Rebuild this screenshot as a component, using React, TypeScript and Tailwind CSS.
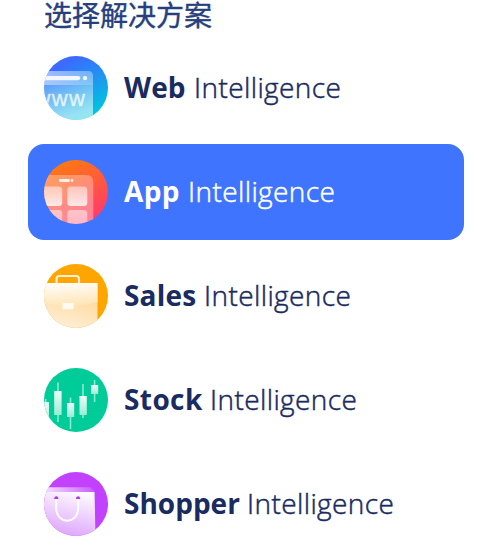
import type { ReactNode } from "react";

function Disc({ id, children }: { id: string; children: ReactNode }) {
  return (
    <svg viewBox="0 0 64 64" className="size-16 shrink-0" aria-hidden="true">
      <defs>
        <clipPath id={`${id}-clip`}>
          <circle cx="32" cy="32" r="32" />
        </clipPath>
      </defs>
      <g clipPath={`url(#${id}-clip)`}>{children}</g>
    </svg>
  );
}

function WebIcon() {
  return (
    <Disc id="web">
      <defs>
        <linearGradient id="web-bg" x1="0.35" y1="0.1" x2="0.75" y2="0.9">
          <stop offset="0" stopColor="#3b6bff" />
          <stop offset="1" stopColor="#00c4df" />
        </linearGradient>
        <linearGradient id="web-page" x1="0" y1="0" x2="0.35" y2="1">
          <stop offset="0" stopColor="#fff" stopOpacity="0.1" />
          <stop offset="1" stopColor="#fff" stopOpacity="0.58" />
        </linearGradient>
        <linearGradient id="web-bar" x1="0" y1="0" x2="1" y2="0">
          <stop offset="0" stopColor="#fff" stopOpacity="0.5" />
          <stop offset="1" stopColor="#fff" stopOpacity="0.12" />
        </linearGradient>
      </defs>
      <rect width="64" height="64" fill="url(#web-bg)" />
      <path d="M-4 15H44Q49 15 49 20V64H-4Z" fill="url(#web-page)" />
      <path d="M-4 15H44Q49 15 49 20V29H-4Z" fill="url(#web-bar)" />
      <rect x="-4" y="20" width="40.3" height="4.2" rx="2.1" fill="#fff" fillOpacity="0.88" />
      <circle cx="41" cy="22.1" r="2.2" fill="#fff" fillOpacity="0.9" />
      <text
        x="-9.5"
        y="50"
        fontSize="22"
        textLength="50.5"
        className="font-['Liberation_Sans',sans-serif]"
        fill="#fff"
        fillOpacity="0.72"
        stroke="#fff"
        strokeOpacity="0.5"
        strokeWidth="0.6"
      >
        www
      </text>
    </Disc>
  );
}

function AppIcon() {
  return (
    <Disc id="app">
      <defs>
        <linearGradient id="app-bg" x1="0.3" y1="0" x2="0.75" y2="0.9">
          <stop offset="0" stopColor="#ff7a0f" />
          <stop offset="1" stopColor="#ff3d68" />
        </linearGradient>
        <linearGradient id="app-phone" x1="0.4" y1="0" x2="0.3" y2="1">
          <stop offset="0" stopColor="#fff" stopOpacity="0.3" />
          <stop offset="1" stopColor="#fff" stopOpacity="0.36" />
        </linearGradient>
        <linearGradient id="app-tile" x1="0" y1="0" x2="0" y2="1">
          <stop offset="0" stopColor="#fff" stopOpacity="0.48" />
          <stop offset="1" stopColor="#fff" stopOpacity="0.8" />
        </linearGradient>
        <linearGradient id="app-low" x1="0" y1="0" x2="0" y2="1">
          <stop offset="0" stopColor="#fff" stopOpacity="0.5" />
          <stop offset="1" stopColor="#fff" stopOpacity="0.4" />
        </linearGradient>
      </defs>
      <rect width="64" height="64" fill="url(#app-bg)" />
      <path d="M-4 15H42Q49.3 15 49.3 22V64H-4Z" fill="url(#app-phone)" />
      <rect x="15" y="19" width="10.8" height="3" rx="1.2" fill="#fff" fillOpacity="0.85" />
      <circle cx="28" cy="20.5" r="1.4" fill="#fff" fillOpacity="0.85" />
      <rect x="-3" y="26.5" width="21.2" height="19.5" rx="3.5" fill="url(#app-tile)" />
      <rect x="23.3" y="26.5" width="20" height="19.5" rx="3.5" fill="url(#app-tile)" />
      <rect x="-3" y="50" width="21.2" height="20" rx="3.5" fill="url(#app-low)" />
      <rect x="23.3" y="50" width="20" height="20" rx="3.5" fill="url(#app-low)" />
    </Disc>
  );
}

function SalesIcon() {
  return (
    <Disc id="sales">
      <defs>
        <linearGradient id="sales-top" x1="0.4" y1="0" x2="0.6" y2="1">
          <stop offset="0" stopColor="#fffdf9" />
          <stop offset="1" stopColor="#ffe4b4" />
        </linearGradient>
        <linearGradient id="sales-low" x1="0.7" y1="0" x2="0.35" y2="1">
          <stop offset="0" stopColor="#ffd38a" />
          <stop offset="1" stopColor="#fff0dc" />
        </linearGradient>
      </defs>
      <rect width="64" height="64" fill="#ffa500" />
      <path d="M12.5 19V15Q12.5 12 15.5 12H32Q35 12 35 15V19" fill="none" stroke="#fff1d7" strokeWidth="2.2" />
      <rect x="-2" y="19" width="55.5" height="47" fill="url(#sales-low)" />
      <path d="M-2 19H53.5V38Q26 46.5 -2 38Z" fill="url(#sales-top)" />
      <rect x="18.5" y="39" width="11.2" height="6.2" fill="#fffaf1" />
    </Disc>
  );
}

const candles = [
  { x: -2, y: 34, w: 7, h: 22, wick: 1.7, top: 31, bottom: 58 },
  { x: 10.2, y: 23, w: 7.4, h: 24, wick: 14, top: 14.5, bottom: 54 },
  { x: 23, y: 35, w: 7.2, h: 14, wick: 26.5, top: 29.5, bottom: 61 },
  { x: 35.5, y: 28, w: 7.3, h: 19, wick: 39, top: 16, bottom: 50 },
  { x: 47, y: 17, w: 7.2, h: 9, wick: 50.6, top: 12, bottom: 34 },
];

function StockIcon() {
  return (
    <Disc id="stock">
      <defs>
        <linearGradient id="stock-body" x1="0" y1="0" x2="0" y2="1">
          <stop offset="0" stopColor="#effcf8" />
          <stop offset="1" stopColor="#9cebd6" />
        </linearGradient>
      </defs>
      <rect width="64" height="64" fill="#00cc99" />
      {candles.map((c) => (
        <g key={c.x}>
          <rect x={c.wick - 0.8} y={c.top} width="1.6" height={c.bottom - c.top} fill="#8ce9d1" />
          <rect x={c.x} y={c.y} width={c.w} height={c.h} rx="0.4" fill="url(#stock-body)" />
        </g>
      ))}
    </Disc>
  );
}

function ShopperIcon() {
  return (
    <Disc id="shop">
      <defs>
        <linearGradient id="shop-front" x1="0.65" y1="0" x2="0.35" y2="1">
          <stop offset="0" stopColor="#fdf9ff" />
          <stop offset="1" stopColor="#dda3ff" />
        </linearGradient>
        <linearGradient id="shop-back" x1="0" y1="0" x2="1" y2="0">
          <stop offset="0" stopColor="#f5e1ff" />
          <stop offset="1" stopColor="#c75cff" />
        </linearGradient>
      </defs>
      <rect width="64" height="64" fill="#c141ff" />
      <path d="M0 15.3H46L50.5 19V20H0Z" fill="url(#shop-back)" />
      <path d="M-2 20H50.5L51.5 64H-2Z" fill="url(#shop-front)" />
      <path d="M10.2 27Q10.2 24.2 12.3 24.2T14.4 27ZM32 27Q32 24.2 34.1 24.2T36.2 27Z" fill="#ad3ee4" />
      <path d="M12.2 27V35.5C12.2 53 34.2 53 34.2 35.5V27" fill="none" stroke="#fff" strokeWidth="2" />
    </Disc>
  );
}

const solutions = [
  { name: "Web", icon: <WebIcon />, width: "w-[61px]", spacing: "tracking-[0.1px]" },
  { name: "App", icon: <AppIcon />, width: "w-[55px]", spacing: "tracking-[0.4px]", active: true },
  { name: "Sales", icon: <SalesIcon />, width: "w-[71px]", spacing: "tracking-[0.2px]" },
  { name: "Stock", icon: <StockIcon />, width: "w-[77px]", spacing: "tracking-[0.4px]" },
  { name: "Shopper", icon: <ShopperIcon />, width: "w-[114px]", spacing: "tracking-[0px]" },
];

export default function App() {
  return (
    <main className="h-[558px] w-[478px] overflow-hidden bg-white pl-7 pr-3.5 text-[#1a2b61]">
      <h2 className="h-10 pl-4 font-['Noto_Sans_CJK_SC',sans-serif] text-[28px] font-normal leading-7 text-[#263f7d] [-webkit-text-stroke:0.4px]">
        选择解决方案
      </h2>
      <ul className="flex flex-col gap-2">
        {solutions.map((s) => (
          <li
            key={s.name}
            className={`flex h-24 items-center gap-4 rounded-2xl px-4 ${s.active ? "bg-[#3e74fe] text-white" : ""}`}
          >
            {s.icon}
            <p className="flex items-baseline gap-[9px] whitespace-nowrap pb-0.5 text-[28px] leading-9">
              <strong className={`${s.width} ${s.spacing} font-['Open_Sans',sans-serif] font-bold`}>{s.name}</strong>
              <span className="font-['Open_Sans',sans-serif] font-light tracking-[0.4px] [-webkit-text-stroke:0.5px]">
                Intelligence
              </span>
            </p>
          </li>
        ))}
      </ul>
    </main>
  );
}
